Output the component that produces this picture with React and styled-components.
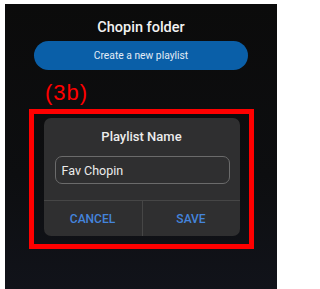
import React from "react";
import styled, { createGlobalStyle } from "styled-components";

const GlobalStyle = createGlobalStyle`
  body {
    margin: 0;
    background: #ffffff;
    font-family: Roboto, "Noto Sans", sans-serif;
  }
`;

const Screen = styled.div`
  margin: 4px 0 0 5px;
  width: 272px;
  height: 285px;
  background: linear-gradient(180deg, #0b0b0b 0%, #0d0e10 60%, #11131a 100%);
  display: flex;
  flex-direction: column;
  align-items: center;
`;

const Title = styled.h1`
  margin: 15px 0 0;
  font-size: 14.5px;
  font-weight: 500;
  line-height: 17px;
  color: #f2f2f2;
`;

const CreateButton = styled.button`
  margin-top: 5px;
  width: 214px;
  height: 29px;
  border: none;
  border-radius: 15px;
  background: #0a5fa8;
  color: #e3ecf6;
  font-family: inherit;
  font-size: 10.3px;
  cursor: pointer;
`;

const Label = styled.div`
  align-self: flex-start;
  margin: 12px 0 0 40px;
  font-family: "Liberation Sans", Arial, sans-serif;
  font-size: 22px;
  line-height: 22px;
  letter-spacing: 1px;
  color: #ff0000;
`;

const Frame = styled.div`
  margin-top: 5px;
  width: 196px;
  height: 118px;
  border: 5px solid #ff0000;
  padding: 4px 9px 8px 10px;
  box-sizing: content-box;
  display: flex;
`;

const Dialog = styled.div`
  width: 196px;
  height: 118px;
  background: #2f2f30;
  border-radius: 7px;
  display: flex;
  flex-direction: column;
`;

const DialogTitle = styled.div`
  margin-top: 11px;
  text-align: center;
  font-size: 13px;
  font-weight: 500;
  line-height: 16px;
  color: #ececec;
`;

const NameInput = styled.input`
  margin: 11px 10px 0 11px;
  height: 28px;
  box-sizing: border-box;
  padding: 0 6px;
  border: 1px solid #6b6b6b;
  border-radius: 7px;
  background: #2f2f30;
  color: #ececec;
  font-family: inherit;
  font-size: 12.5px;
  outline: 0;
`;

const Actions = styled.div`
  margin-top: auto;
  height: 35px;
  border-top: 1px solid #464646;
  display: grid;
  grid-template-columns: 98px 1fr;
`;

const Action = styled.button`
  border: none;
  border-left: ${(p) => (p.divided ? "1px solid #464646" : "none")};
  background: transparent;
  color: #4484dc;
  font-family: inherit;
  font-size: 12px;
  font-weight: 500;
  cursor: pointer;
`;

export default function App() {
  return (
    <>
      <GlobalStyle />
      <Screen>
        <Title>Chopin folder</Title>
        <CreateButton>Create a new playlist</CreateButton>
        <Label>(3b)</Label>
        <Frame>
          <Dialog>
            <DialogTitle>Playlist Name</DialogTitle>
            <NameInput defaultValue="Fav Chopin" />
            <Actions>
              <Action>CANCEL</Action>
              <Action divided>SAVE</Action>
            </Actions>
          </Dialog>
        </Frame>
      </Screen>
    </>
  );
}
